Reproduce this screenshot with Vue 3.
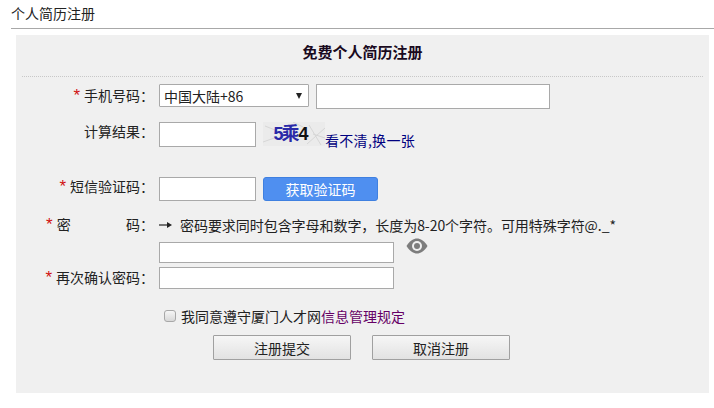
<script setup>
const hint = '密码要求同时包含字母和数字，长度为8-20个字符。可用特殊字符@._*'
</script>

<template>
  <div class="page">
    <div class="head">个人简历注册</div>
    <div class="panel">
      <h1 class="title">免费个人简历注册</h1>

      <div class="row r1">
        <label class="label"><i class="star">*</i>手机号码：</label>
        <div class="select"><span>中国大陆+86</span><b class="caret"></b></div>
        <input class="input phone" type="text" />
      </div>

      <div class="row r2">
        <label class="label">计算结果：</label>
        <input class="input short" type="text" />
        <div class="captcha">
          <svg width="62" height="24" viewBox="0 0 62 24" class="noise">
            <path d="M0 20L14 15M44 22L62 6M46 3L58 23M2 4L12 8M30 0L40 5M50 12L62 16" stroke="#d6d6d6" fill="none" />
          </svg>
          <span class="c1">5乘</span><span class="c2">4</span>
        </div>
        <a class="link">看不清,换一张</a>
      </div>

      <div class="row r3">
        <label class="label"><i class="star">*</i>短信验证码：</label>
        <input class="input short" type="text" />
        <button class="send" type="button">获取验证码</button>
      </div>

      <div class="row r4">
        <label class="label spread"><span><i class="star">*</i>密</span><span>码：</span></label>
        <div class="hint">
          <svg class="arrow" width="14" height="8" viewBox="0 0 14 8">
            <path d="M0 4H9" stroke="#222" stroke-width="1.2" />
            <path d="M8 1L13 4L8 7Z" fill="#222" />
          </svg>
          <span>{{ hint }}</span>
        </div>
      </div>

      <div class="row r5">
        <input class="input long" type="text" />
        <svg class="eye" width="22" height="16" viewBox="0 0 22 16">
          <path d="M0.5 8C4 2.500 7.500 0.500 11 0.500S18 2.500 21.500 8C18 13.500 14.500 15.500 11 15.500S4 13.500 0.500 8Z" fill="#7d7d7d" />
          <circle cx="11" cy="8" r="5" fill="#f0f0f0" />
          <circle cx="11" cy="8" r="3" fill="#7d7d7d" />
        </svg>
      </div>

      <div class="row r6">
        <label class="label"><i class="star">*</i>再次确认密码：</label>
        <input class="input long confirm" type="text" />
      </div>

      <div class="agree">
        <span class="check"></span>
        <span>我同意遵守厦门人才网</span><a class="rule">信息管理规定</a>
      </div>

      <div class="actions">
        <button class="btn" type="button">注册提交</button>
        <button class="btn" type="button">取消注册</button>
      </div>
    </div>
  </div>
</template>

<style scoped>
.page {
  width: 714px;
  height: 408px;
  overflow: hidden;
  background: #fff;
  font-family: "Noto Sans CJK SC", "Liberation Sans", sans-serif;
  font-size: 14px;
  color: #222;
  padding-left: 11px;
  box-sizing: border-box;
}
.head {
  height: 28px;
  line-height: 27px;
  border-bottom: 1px solid #a8a8a8;
  box-sizing: content-box;
}
.panel {
  width: 693px;
  height: 358px;
  margin: 6px 0 0 5px;
  background: #f0f0f0;
  display: flex;
  flex-direction: column;
  position: relative;
}
.title {
  margin: 0 6px;
  height: 41px;
  line-height: 34px;
  font-size: 15px;
  font-weight: 700;
  text-align: center;
  color: #1a0a1e;
  border-bottom: 1px dotted #c8c8c8;
}
.row {
  display: flex;
  align-items: flex-start;
  padding-left: 143px;
}
.label {
  width: 143px;
  margin-left: -143px;
  padding-right: 5px;
  box-sizing: border-box;
  display: flex;
  justify-content: flex-end;
  white-space: nowrap;
  line-height: 20px;
}
.spread {
  justify-content: space-between;
  padding-left: 30px;
}
.star {
  font-style: normal;
  color: #d01010;
  font-family: "Liberation Sans", sans-serif;
  font-size: 17px;
  line-height: 22px;
  margin-right: 4px;
}
.input {
  box-sizing: border-box;
  border: 1px solid #a9a9a9;
  background: #fff;
  padding: 0;
  margin: 0;
  outline: none;
}
.r1 { margin-top: 7px; height: 25px; }
.r1 .label { padding-top: 1px; }
.select {
  width: 150px;
  height: 23px;
  box-sizing: border-box;
  border: 1px solid #a9a9a9;
  border-radius: 1px;
  background: #fff;
  display: flex;
  align-items: center;
  justify-content: space-between;
  padding: 0 6px 0 4px;
  font-size: 14px;
}
.caret {
  width: 0;
  height: 0;
  border-left: 3.500px solid transparent;
  border-right: 3.500px solid transparent;
  border-top: 6px solid #222;
}
.phone { width: 234px; height: 25px; margin-left: 7px; }
.r2 { margin-top: 13px; height: 25px; }
.r2 .label { margin-top: -1px; }
.short { width: 97px; height: 25px; }
.captcha {
  width: 62px;
  height: 24px;
  margin-left: 7px;
  padding-right: 8px;
  box-sizing: border-box;
  background: #ebebeb;
  position: relative;
  display: flex;
  align-items: center;
  justify-content: center;
  font-family: "Liberation Sans", "Noto Sans CJK SC", sans-serif;
  font-weight: 700;
  font-size: 18px;
  line-height: 1;
  letter-spacing: -2px;
}
.noise { position: absolute; inset: 0; }
.c1 { color: #2a2aa8; position: relative; }
.c2 { color: #111; position: relative; margin-left: 1px; }
.link {
  color: #000080;
  line-height: 20px;
  margin-top: 8px;
  white-space: nowrap;
  letter-spacing: 0.3px;
}
.r3 { margin-top: 30px; height: 24px; }
.r3 .label { margin-top: -1px; }
.r3 .short { height: 24px; }
.send {
  width: 115px;
  height: 24px;
  margin-left: 7px;
  border: 1px solid #3f80e0;
  border-radius: 3px;
  background: #4f8ff0;
  color: #fff;
  font: inherit;
  padding: 0;
}
.r4 { margin-top: 14px; height: 27px; }
.r4 .label { margin-top: -1px; }
.hint {
  display: flex;
  align-items: flex-start;
  line-height: 20px;
  white-space: nowrap;
  color: #222;
  letter-spacing: -0.05px;
}
.arrow { margin: 6px 7px 0 0; }
.r5 { height: 25px; }
.long { width: 235px; height: 21px; }
.eye { margin: -4px 0 0 12px; }
.confirm { height: 22px; }
.r6 { height: 22px; }
.agree {
  margin: 17px 0 0 148px;
  height: 20px;
  line-height: 20px;
  display: flex;
  align-items: center;
  white-space: nowrap;
}
.check {
  width: 12px;
  height: 12px;
  box-sizing: border-box;
  margin-right: 5px;
  border: 1px solid #a8a8a8;
  border-radius: 3px;
  background: linear-gradient(#f6f6f6, #d8d8d8);
}
.rule { color: #660066; }
.actions {
  display: flex;
  gap: 21px;
  margin: 9px 0 0 197px;
}
.btn {
  width: 138px;
  height: 25px;
  border: 1px solid #a0a0a0;
  border-radius: 1px;
  background: linear-gradient(#f6f6f6, #e2e2e2);
  font: inherit;
  color: #222;
  padding: 0;
}
</style>
